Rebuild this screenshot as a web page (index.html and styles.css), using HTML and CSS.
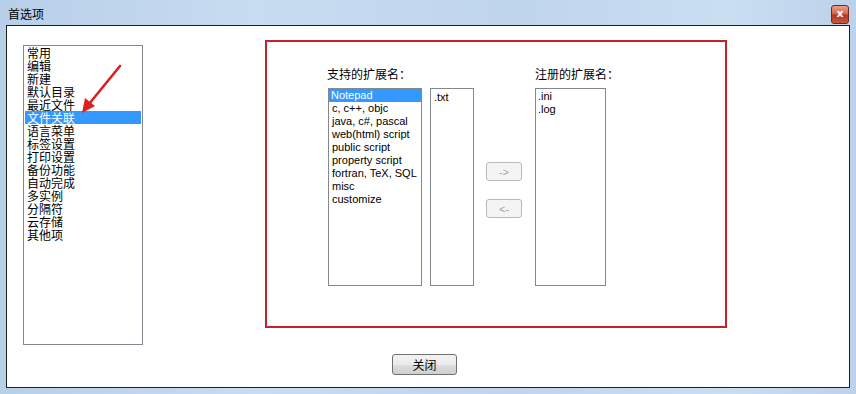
FILE: index.html
```html
<!DOCTYPE html>
<html lang="zh-CN">
<head>
    <meta charset="UTF-8">
    <title>首选项</title>
    <link rel="stylesheet" href="styles.css">
</head>
<body>
    <div class="window">
        <div class="titlebar">
            <span class="title">首选项</span>
            <span class="close-x">x</span>
        </div>
        <div class="client">
            <div class="main-row">
                <ul class="listbox nav-list">
                    <li>常用</li>
                    <li>编辑</li>
                    <li>新建</li>
                    <li>默认目录</li>
                    <li>最近文件</li>
                    <li class="selected">文件关联</li>
                    <li>语言菜单</li>
                    <li>标签设置</li>
                    <li>打印设置</li>
                    <li>备份功能</li>
                    <li>自动完成</li>
                    <li>多实例</li>
                    <li>分隔符</li>
                    <li>云存储</li>
                    <li>其他项</li>
                </ul>
                <div class="panel">
                    <div class="group">
                        <div class="label">支持的扩展名：</div>
                        <div class="lists">
                            <ul class="listbox ext-types">
                                <li class="selected">Notepad</li>
                                <li>c, c++, objc</li>
                                <li>java, c#, pascal</li>
                                <li>web(html) script</li>
                                <li>public script</li>
                                <li>property script</li>
                                <li>fortran, TeX, SQL</li>
                                <li>misc</li>
                                <li>customize</li>
                            </ul>
                            <ul class="listbox ext-names">
                                <li>.txt</li>
                            </ul>
                        </div>
                    </div>
                    <div class="move-buttons">
                        <button class="small-btn" disabled>-&gt;</button>
                        <button class="small-btn" disabled>&lt;-</button>
                    </div>
                    <div class="group">
                        <div class="label">注册的扩展名：</div>
                        <ul class="listbox registered">
                            <li>.ini</li>
                            <li>.log</li>
                        </ul>
                    </div>
                </div>
            </div>
            <div class="footer">
                <button class="close-btn">关闭</button>
            </div>
            <svg class="arrow" width="50" height="60" viewBox="0 0 50 60">
                <line x1="44" y1="4" x2="13" y2="42" stroke="#d8221e" stroke-width="2.6" stroke-linecap="round"/>
                <polygon points="6,51 9,36 19,44" fill="#d8221e"/>
            </svg>
        </div>
    </div>
</body>
</html>
```

FILE: styles.css
```css
body {
    margin: 0;
    font-family: "Liberation Sans", "Noto Sans CJK SC", sans-serif;
    font-size: 11px;
    color: #000;
    background: #fff;
}
ul {
    list-style: none;
    margin: 0;
    padding: 0;
}
.window {
    width: 856px;
    height: 394px;
    box-sizing: border-box;
    padding: 0 6px 6px 6px;
    background: linear-gradient(90deg, #b7cfe8 0%, #c8dcf1 30%, #bfd5ec 60%, #cadef2 85%, #bcd2ea 100%);
    display: flex;
    flex-direction: column;
}
.titlebar {
    height: 25px;
    display: flex;
    align-items: center;
    justify-content: space-between;
    flex-shrink: 0;
}
.title {
    font-family: "Noto Sans CJK SC", sans-serif;
    font-size: 12px;
    padding-left: 2px;
    margin-top: 1px;
    color: #000;
}
.close-x {
    width: 16px;
    height: 17px;
    margin-right: 1px;
    margin-top: 3px;
    border: 1px solid #6d2a22;
    border-radius: 3px;
    background: linear-gradient(#e8a08e 0%, #d1654f 45%, #b8321c 55%, #c75a3e 100%);
    color: #fff;
    font-family: "DejaVu Sans", sans-serif;
    font-weight: bold;
    font-size: 11px;
    line-height: 15px;
    text-align: center;
}
.client {
    position: relative;
    flex: 1;
    background: #fff;
    border: 1px solid #1e1e1e;
    padding: 14px 0 0 16px;
}
.main-row {
    display: flex;
    align-items: flex-start;
}
.listbox {
    box-sizing: border-box;
    border: 1px solid #828790;
    background: #fff;
}
.listbox li {
    height: 13px;
    line-height: 13px;
    white-space: nowrap;
}
.listbox li.selected {
    background: #3399ff;
    color: #fff;
}
.nav-list {
    width: 120px;
    height: 300px;
    margin-top: 5px;
    padding: 0 1px;
    font-family: "Noto Sans CJK SC", sans-serif;
    font-size: 12px;
}
.nav-list li {
    padding-left: 2px;
}
.panel {
    box-sizing: border-box;
    width: 462px;
    height: 288px;
    margin-left: 122px;
    border: 2px solid #c4222c;
    padding: 25px 0 0 60px;
    display: flex;
    align-items: flex-start;
}
.group {
    display: flex;
    flex-direction: column;
}
.label {
    font-family: "Noto Sans CJK SC", sans-serif;
    font-size: 12px;
    line-height: 14px;
    height: 14px;
    margin-bottom: 7px;
}
.lists {
    display: flex;
    gap: 8px;
    padding-left: 1px;
}
.ext-types {
    width: 94px;
    height: 198px;
}
.ext-types li {
    padding-left: 3px;
}
.ext-types li.selected {
    padding-left: 2px;
}
.ext-names {
    width: 44px;
    height: 198px;
    padding-top: 2px;
}
.ext-names li {
    padding-left: 3px;
}
.move-buttons {
    display: flex;
    flex-direction: column;
    gap: 18px;
    margin: 95px 0 0 12px;
}
.small-btn {
    width: 36px;
    height: 19px;
    padding: 0;
    border: 1px solid #b5b9bd;
    border-radius: 3px;
    background: #f4f4f4;
    color: #a3a3a3;
    font-family: "Liberation Sans", sans-serif;
    font-size: 11px;
}
.group + .move-buttons + .group {
    margin-left: 13px;
}
.registered {
    width: 71px;
    height: 198px;
    padding-top: 1px;
}
.registered li {
    padding-left: 2px;
}
.footer {
    padding-left: 369px;
    margin-top: 9px;
}
.close-btn {
    width: 65px;
    height: 21px;
    padding: 0;
    border: 1px solid #707070;
    border-radius: 3px;
    background: linear-gradient(#f2f2f2 0%, #ebebeb 50%, #dddddd 51%, #cfcfcf 100%);
    font-family: "Noto Sans CJK SC", sans-serif;
    font-size: 12px;
    color: #000;
}
.arrow {
    position: absolute;
    left: 69px;
    top: 36px;
}
```
